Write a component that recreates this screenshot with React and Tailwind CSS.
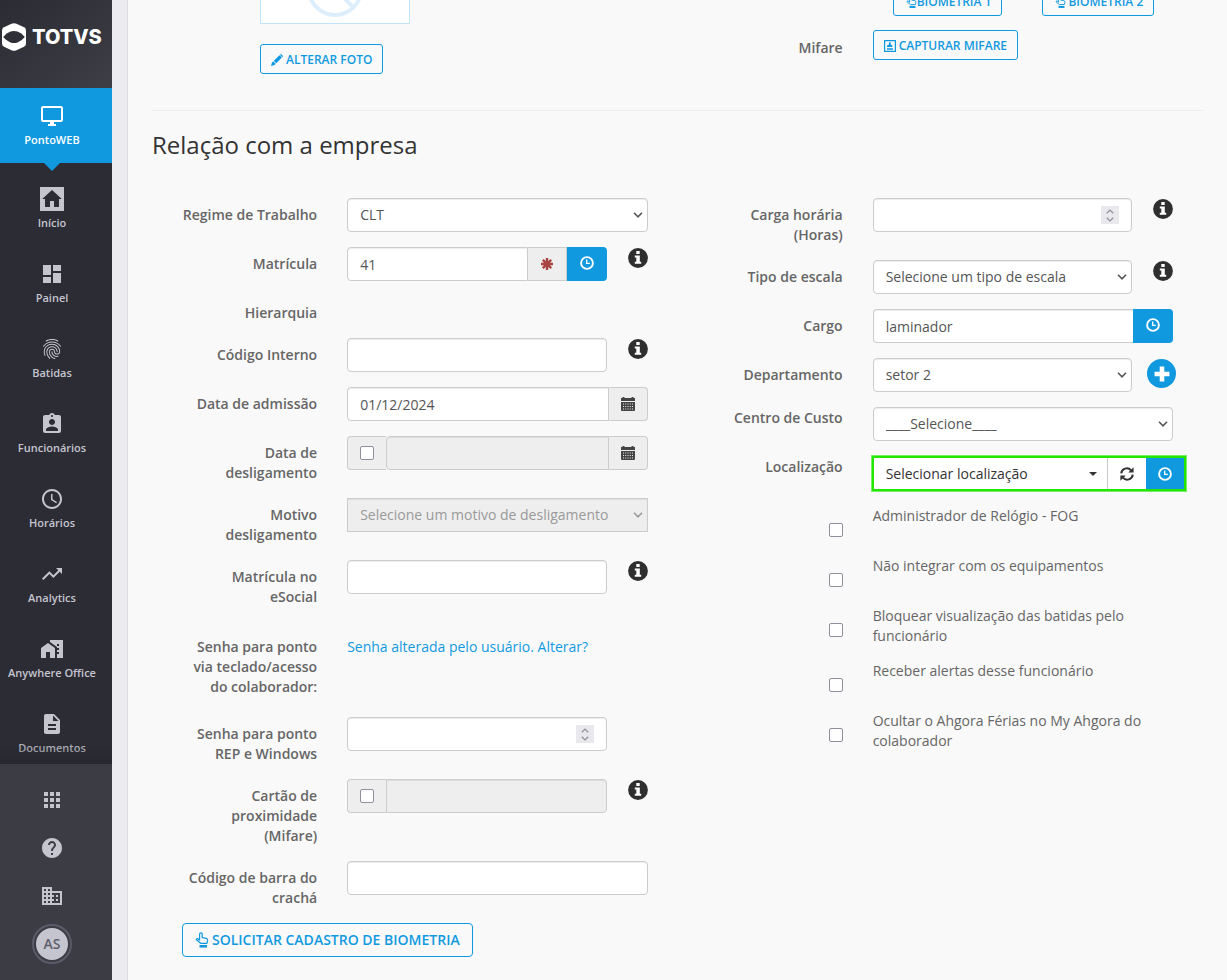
import React from "react";
import {
  MdOutlineDesktopWindows,
  MdDashboard,
  MdFingerprint,
  MdAssignmentInd,
  MdAccessTime,
  MdTrendingUp,
  MdHomeWork,
  MdDescription,
  MdApps,
  MdHelp,
  MdDomain,
} from "react-icons/md";

/* ---------- icons ---------- */

function HomeBoxIcon() {
  return (
    <svg viewBox="0 0 24 24" className="size-6" fill="currentColor" aria-hidden="true">
      <path fillRule="evenodd" d="M0 0h24v24H0z M12 3 2.2 12H5v8h5v-6h4v6h5v-8h2.800z" />
    </svg>
  );
}

function ClockIcon() {
  return (
    <svg viewBox="0 0 14 14" className="size-3.5" fill="none" stroke="currentColor" aria-hidden="true">
      <circle cx="7" cy="7" r="5.9" strokeWidth="1.9" />
      <path d="M6.700 3.500V7.400H9.800" strokeWidth="1.300" />
    </svg>
  );
}

function InfoIcon() {
  return (
    <svg viewBox="0 0 20 20" className="size-5 text-[#2f2f2f]" aria-label="Informação" role="img">
      <circle cx="10" cy="10" r="9.900" fill="currentColor" />
      <path
        fill="#fff"
        d="M8.300 3h3.400v3H8.300zM6.800 7.500h5v6.200h1.400v2H6.800v-2h1.500V9.400H6.800z"
      />
    </svg>
  );
}

function AsteriskIcon() {
  return (
    <svg viewBox="0 0 14 14" className="size-3.5 text-[#a94442]" stroke="currentColor" strokeWidth="2.400" aria-hidden="true">
      <path d="M7 1v12M1 7h12M2.800 2.800l8.400 8.400M11.200 2.800l-8.400 8.400" />
    </svg>
  );
}

function CalendarIcon() {
  return (
    <svg viewBox="0 0 14 14" className="size-3.5 text-[#444]" fill="currentColor" aria-hidden="true">
      <path d="M0 1h1.500V0h2v1h7V0h2v1H14v3H0z" />
      <path
        fillRule="evenodd"
        d="M0 5h14v8q0 1-1 1H1q-1 0-1-1zM2 6.500v1h1v-1zm2.250 0v1h1v-1zm2.250 0v1h1v-1zm2.250 0v1h1v-1zm2.250 0v1h1v-1zM2 9v1h1V9zm2.250 0v1h1V9zm2.250 0v1h1V9zm2.250 0v1h1V9zm2.250 0v1h1V9zM2 11.500v1h1v-1zm2.250 0v1h1v-1zm2.250 0v1h1v-1zm2.250 0v1h1v-1zm2.250 0v1h1v-1z"
      />
    </svg>
  );
}

function RefreshIcon() {
  return (
    <svg viewBox="0 0 14 14" className="size-3.5" aria-hidden="true">
      <path d="M1.200 6.300A5.600 5.600 0 0 1 11 3.300M12.800 7.700A5.600 5.600 0 0 1 3 10.700" fill="none" stroke="currentColor" strokeWidth="2" />
      <path d="M13.600 0.300V5.600H8.300zM0.400 13.700V8.400H5.700z" fill="currentColor" />
    </svg>
  );
}

function PencilIcon() {
  return (
    <svg viewBox="0 0 12 12" className="size-3" fill="currentColor" aria-hidden="true">
      <path d="M0 12l1-3.500L2.200 7.300l2.500 2.500L3.500 11zM2.800 6.700L8.500 1.200 10.900 3.600 5.300 9.200zM9.100.6q.8-.8 1.600 0l.8.8q.8.8 0 1.600l-.2.2L8.900.8z" />
    </svg>
  );
}

function HandUpIcon({ className }) {
  return (
    <svg viewBox="0 0 14 16" className={className} aria-hidden="true">
      <path
        d="M4.600 8.400V2.200a1.300 1.300 0 0 1 2.600 0V5.600L11.300 6.300q1.500.4 1.300 1.900L12 11.300H5.600L1.400 7.800q-.3-1.300 1.200-1.300L4.600 8.200"
        fill="none"
        stroke="currentColor"
        strokeWidth="1.200"
        strokeLinejoin="round"
      />
      <path d="M4.500 13H12v2.600H4.500z" fill="currentColor" />
    </svg>
  );
}

function CardIcon() {
  return (
    <svg viewBox="0 0 12 12" className="size-3" fill="currentColor" aria-hidden="true">
      <path fillRule="evenodd" d="M0 0h12v12H0zM1.200 1.200v9.600h9.600V1.200z" />
      <path d="M5 2.200h1.600v2L8.300 5.600V7H3V5.600L5 4.400zM3 7.900h6v.9H3zM3 9.300h6v.8H3z" />
    </svg>
  );
}

function PlusIcon() {
  return (
    <svg viewBox="0 0 14 14" className="size-4" fill="currentColor" aria-hidden="true">
      <path d="M5 .5h4V5h4.500v4H9v4.500H5V9H.5V5H5z" />
    </svg>
  );
}

function Chevron({ className }) {
  return (
    <svg viewBox="0 0 10 6" className={className} fill="none" stroke="currentColor" strokeWidth="1.600" aria-hidden="true">
      <path d="M1 .8l4 4 4-4" />
    </svg>
  );
}

/* ---------- form pieces ---------- */

const box =
  "h-[34px] w-full min-w-0 border border-[#ccc] px-3 text-sm text-[#555] shadow-[inset_0_1px_1px_rgba(0,0,0,0.075)] outline-none";
const addon = "flex h-[34px] shrink-0 items-center justify-center border border-[#ccc] bg-[#eee]";
const check =
  "block size-3.5 shrink-0 appearance-none rounded-[2px] border border-[#8f8f9d] bg-white checked:bg-[#1199e0]";
const blue = "flex h-[34px] w-10 shrink-0 items-center justify-center bg-[#1199e0] pb-0.5 text-white";

function Row({ label, id, flush, className = "", children }) {
  return (
    <div className={`mb-[15px] grid grid-cols-[minmax(0,1fr)_minmax(0,2fr)] ${className}`}>
      <label
        htmlFor={id}
        className={`px-[15px] text-right text-sm leading-5 font-semibold text-[#666] ${flush ? "pt-px" : "pt-[7px]"}`}
      >
        {label}
      </label>
      <div className="px-[15px]">{children}</div>
    </div>
  );
}

function WithSide({ side, children }) {
  return (
    <div className="grid grid-cols-[minmax(0,1fr)_41px]">
      <div className="min-w-0">{children}</div>
      {side || (
        <div className="flex justify-end pt-px">
          <InfoIcon />
        </div>
      )}
    </div>
  );
}

function Select({ id, text, disabled }) {
  return (
    <div className={`relative ${disabled ? "text-[#999]" : "text-[#555]"}`}>
      <select
        id={id}
        disabled={disabled}
        className={`${box} appearance-none ${
          disabled ? "bg-[#eee] text-[#999] opacity-100" : "rounded-sm bg-white"
        }`}
      >
        <option>{text}</option>
      </select>
      <Chevron className="pointer-events-none absolute top-3.5 right-[5px] h-1.5 w-2.5" />
    </div>
  );
}

function NumberBox({ id }) {
  return (
    <div className="relative">
      <input
        id={id}
        type="number"
        className={`${box} rounded-sm bg-white [appearance:textfield] [&::-webkit-inner-spin-button]:appearance-none`}
      />
      <span className="pointer-events-none absolute top-2 right-[13px] flex size-[18px] flex-col items-center justify-center gap-[3px] bg-[#e9e9ed] text-[#8f8f9d]">
        <Chevron className="h-[5px] w-2 rotate-180" />
        <Chevron className="h-[5px] w-2" />
      </span>
    </div>
  );
}

function OutlineButton({ large, className = "", children }) {
  return (
    <button
      type="button"
      className={`flex items-center border border-[#1199e0] font-semibold whitespace-nowrap text-[#1199e0] ${
        large ? "h-[34px] rounded-sm px-3 text-sm" : "h-[30px] rounded-[3px] px-2.5 pt-0.5 text-xs"
      } ${className}`}
    >
      {children}
    </button>
  );
}

function CheckRow({ id, text }) {
  return (
    <div className="mb-[15px] grid min-h-[35px] grid-cols-[minmax(0,1fr)_minmax(0,2fr)] items-start">
      <div className="flex justify-end px-[15px] pt-[17px]">
        <input id={id} type="checkbox" className={check} />
      </div>
      <label htmlFor={id} className="px-[15px] text-sm leading-5 text-[#666]">
        {text}
      </label>
    </div>
  );
}

/* ---------- sidebar ---------- */

const items = [
  ["Início", HomeBoxIcon],
  ["Painel", MdDashboard],
  ["Batidas", MdFingerprint],
  ["Funcionários", MdAssignmentInd],
  ["Horários", MdAccessTime],
  ["Analytics", MdTrendingUp],
  ["Anywhere Office", MdHomeWork],
  ["Documentos", MdDescription],
];

const tools = [
  ["Aplicativos", MdApps],
  ["Ajuda", MdHelp],
  ["Empresa", MdDomain],
];

const navItem =
  "flex h-[75px] flex-col items-center gap-1 pt-4 pr-2 text-[11px] leading-4 font-semibold whitespace-nowrap";

function Sidebar() {
  return (
    <aside className="sticky top-0 flex h-screen w-28 shrink-0 flex-col bg-[#2b2c34] text-[#c5c5cf]">
      <div className="flex h-[88px] shrink-0 items-start gap-1.5 bg-linear-to-br from-[#2b2b33] to-[#3e3e47] pt-[23px] pl-0.5 text-white">
        <svg viewBox="0 0 24 28" className="h-7 w-6 shrink-0" aria-hidden="true">
          <path fill="#fff" d="M9.500.7Q12-.4 14.500.7L22 4.200Q24 5.200 24 7.500V20.500Q24 22.800 22 23.800L14.500 27.300Q12 28.400 9.500 27.300L2 23.800Q0 22.800 0 20.500V7.500Q0 5.200 2 4.200z" />
          <path fill="#2f2f37" d="M1.200 14Q4.500 9.800 8.500 8.600Q12 7.600 15.500 8.600Q19.500 9.800 22.800 14Q19.500 18.200 15.500 19.400Q12 20.400 8.500 19.400Q4.500 18.200 1.200 14z" />
        </svg>
        <span className="font-[Inter,sans-serif] text-xl leading-7 font-extrabold">TOTVS</span>
      </div>
      <nav className="relative min-h-0 flex-1 overflow-hidden">
        <a href="#ponto" className={`${navItem} bg-[#1199e0] text-white`}>
          <MdOutlineDesktopWindows className="size-6" />
          PontoWEB
        </a>
        <svg viewBox="0 0 16 8" className="ml-11 block h-2 w-4 text-[#1199e0]" fill="currentColor" aria-hidden="true">
          <path d="M0 0h16L8 8z" />
        </svg>
        {items.map(([name, Icon]) => (
          <a key={name} href="#menu" className={navItem}>
            <Icon className="size-6" />
            {name}
          </a>
        ))}
        <div className="pointer-events-none absolute inset-x-0 bottom-0 h-6 bg-linear-to-t from-[#26262d]/60 to-transparent" />
      </nav>
      <div className="shrink-0 bg-[#3c3c45] py-3 pr-2">
        {tools.map(([name, Icon]) => (
          <button key={name} type="button" aria-label={name} className="flex h-12 w-full items-center justify-center">
            <Icon className="size-6" />
          </button>
        ))}
        <div className="flex h-12 items-center justify-center">
          <button
            type="button"
            className="flex size-10 items-center justify-center rounded-full border-2 border-[#5a5a69] p-0.5"
          >
            <span className="flex size-8 items-center justify-center rounded-full bg-[#c5c5cf] text-sm font-semibold text-[#5f5f6b]">
              AS
            </span>
          </button>
        </div>
      </div>
    </aside>
  );
}

/* ---------- page ---------- */

export default function App() {
  return (
    <div className="flex min-h-screen bg-[#ebebf0] font-['Open_Sans',sans-serif]">
      <Sidebar />
      <main className="ml-[15px] min-w-0 flex-1 border-l border-[#dcdce2] bg-[#f9f9f9] px-6 pb-5">
        <section className="grid h-[110px] grid-cols-2 overflow-hidden">
          <div className="flex flex-col items-start gap-5 pl-[108px]">
            <div className="flex h-6 w-[150px] items-end justify-center overflow-hidden border border-t-0 border-[#c3e3f9] bg-white pb-1.5">
              <svg viewBox="0 0 56 56" className="size-14 shrink-0 text-[#dceefc]" fill="none" stroke="currentColor" strokeWidth="4" aria-hidden="true">
                <circle cx="28" cy="28" r="26" />
                <path d="M9 9l38 38" />
              </svg>
            </div>
            <OutlineButton className="gap-[3px]">
              <PencilIcon />
              ALTERAR FOTO
            </OutlineButton>
          </div>
          <div className="px-[15px]">
            <div className="-mt-3.5 mb-3.5 grid grid-cols-[minmax(0,1fr)_minmax(0,2fr)]">
              <div />
              <div className="flex gap-10 pl-[35px]">
                <OutlineButton className="pl-3">
                  <HandUpIcon className="h-3.5 w-[11px]" />
                  BIOMETRIA 1
                </OutlineButton>
                <OutlineButton className="gap-0.5 pl-3">
                  <HandUpIcon className="h-3.5 w-[11px]" />
                  BIOMETRIA 2
                </OutlineButton>
              </div>
            </div>
            <div className="grid grid-cols-[minmax(0,1fr)_minmax(0,2fr)]">
              <span className="px-[15px] pt-2 text-right text-sm leading-5 font-semibold text-[#666]">Mifare</span>
              <div className="flex px-[15px]">
                <OutlineButton className="gap-[3px]">
                  <CardIcon />
                  CAPTURAR MIFARE
                </OutlineButton>
              </div>
            </div>
          </div>
        </section>

        <hr className="border-[#eee]" />
        <h2 className="pt-[18px] pb-[37px] text-2xl leading-8 text-[#333]">Relação com a empresa</h2>

        <form className="grid grid-cols-2">
          <div className="px-[15px]">
            <Row label="Regime de Trabalho" id="regime">
              <Select id="regime" text="CLT" />
            </Row>
            <Row label="Matrícula" id="matricula">
              <WithSide>
                <div className="flex">
                  <input id="matricula" defaultValue="41" className={`${box} rounded-l-sm bg-white`} />
                  <span className={`${addon} w-[39px] border-l-0`}>
                    <AsteriskIcon />
                  </span>
                  <button type="button" aria-label="Histórico de matrícula" className={`${blue} rounded-r-sm`}>
                    <ClockIcon />
                  </button>
                </div>
              </WithSide>
            </Row>
            <Row label="Hierarquia" />
            <Row label="Código Interno" id="interno">
              <WithSide>
                <input id="interno" className={`${box} rounded-sm bg-white`} />
              </WithSide>
            </Row>
            <Row label="Data de admissão" id="admissao">
              <div className="flex">
                <input id="admissao" defaultValue="01/12/2024" className={`${box} rounded-l-sm bg-white`} />
                <span className={`${addon} w-[39px] rounded-r-sm border-l-0`}>
                  <CalendarIcon />
                </span>
              </div>
            </Row>
            <Row label="Data de desligamento" id="desligamento">
              <div className="flex">
                <span className={`${addon} w-[39px] rounded-l-sm border-r-0`}>
                  <input type="checkbox" aria-label="Ativar data de desligamento" className={check} />
                </span>
                <input id="desligamento" disabled className={`${box} rounded-l-sm bg-[#eee]`} />
                <span className={`${addon} w-[39px] rounded-r-sm border-l-0`}>
                  <CalendarIcon />
                </span>
              </div>
            </Row>
            <Row label="Motivo desligamento" id="motivo">
              <Select id="motivo" text="Selecione um motivo de desligamento" disabled />
            </Row>
            <Row label="Matrícula no eSocial" id="esocial">
              <WithSide>
                <input id="esocial" className={`${box} rounded-sm bg-white`} />
              </WithSide>
            </Row>
            <Row label="Senha para ponto via teclado/acesso do colaborador:" className="pt-2 pb-[5px]">
              <a href="#senha" className="block pt-[7px] text-sm leading-5 text-[#1199e0]">
                Senha alterada pelo usuário. Alterar?
              </a>
            </Row>
            <Row label="Senha para ponto REP e Windows" id="rep">
              <WithSide side={<span />}>
                <NumberBox id="rep" />
              </WithSide>
            </Row>
            <Row label="Cartão de proximidade (Mifare)" id="cartao">
              <WithSide>
                <div className="flex">
                  <span className={`${addon} w-[39px] rounded-l-sm border-r-0`}>
                    <input type="checkbox" aria-label="Ativar cartão" className={check} />
                  </span>
                  <input id="cartao" disabled className={`${box} rounded-r-sm bg-[#eee]`} />
                </div>
              </WithSide>
            </Row>
            <Row label="Código de barra do crachá" id="barra">
              <input id="barra" className={`${box} rounded-sm bg-white`} />
            </Row>
            <div className="flex px-[15px]">
              <OutlineButton large className="gap-[3px]">
                <HandUpIcon className="h-4 w-3.5" />
                SOLICITAR CADASTRO DE BIOMETRIA
              </OutlineButton>
            </div>
          </div>

          <div className="px-[15px]">
            <Row label="Carga horária (Horas)" id="carga">
              <WithSide>
                <NumberBox id="carga" />
              </WithSide>
            </Row>
            <Row label="Tipo de escala" id="escala">
              <WithSide>
                <Select id="escala" text="Selecione um tipo de escala" />
              </WithSide>
            </Row>
            <Row label="Cargo" id="cargo">
              <div className="flex">
                <input id="cargo" defaultValue="laminador" className={`${box} rounded-l-sm border-r-0 bg-white`} />
                <button type="button" aria-label="Histórico de cargo" className={`${blue} rounded-r-sm`}>
                  <ClockIcon />
                </button>
              </div>
            </Row>
            <Row label="Departamento" id="depto">
              <WithSide
                side={
                  <button
                    type="button"
                    aria-label="Adicionar departamento"
                    className="mt-px ml-[15px] flex size-[29px] items-center justify-center rounded-full bg-[#1199e0] text-white"
                  >
                    <PlusIcon />
                  </button>
                }
              >
                <Select id="depto" text="setor 2" />
              </WithSide>
            </Row>
            <Row label="Centro de Custo" id="custo" flush>
              <Select id="custo" text="____Selecione____" />
            </Row>
            <Row label="Localização" id="local" flush>
              <div className="-mr-[13px] -ml-px flex h-[35px] border-2 border-[#22e600] bg-white text-[#333] ring-1 ring-[#22e600]/60">
                <button id="local" type="button" className="flex min-w-0 flex-1 items-center justify-between pr-2.5 pl-3 text-sm">
                  Selecionar localização
                  <svg viewBox="0 0 8 4" className="h-1 w-2" fill="currentColor" aria-hidden="true">
                    <path d="M0 0h8L4 4z" />
                  </svg>
                </button>
                <button
                  type="button"
                  aria-label="Atualizar"
                  className="flex w-[39px] shrink-0 items-center justify-center border-l border-[#ccc]"
                >
                  <RefreshIcon />
                </button>
                <button
                  type="button"
                  aria-label="Histórico de localização"
                  className="flex w-[38px] shrink-0 items-center justify-center bg-[#1199e0] text-white"
                >
                  <ClockIcon />
                </button>
              </div>
            </Row>
            <CheckRow id="fog" text="Administrador de Relógio - FOG" />
            <CheckRow id="integrar" text="Não integrar com os equipamentos" />
            <CheckRow id="bloquear" text="Bloquear visualização das batidas pelo funcionário" />
            <CheckRow id="alertas" text="Receber alertas desse funcionário" />
            <CheckRow id="ferias" text="Ocultar o Ahgora Férias no My Ahgora do colaborador" />
          </div>
        </form>
      </main>
    </div>
  );
}
